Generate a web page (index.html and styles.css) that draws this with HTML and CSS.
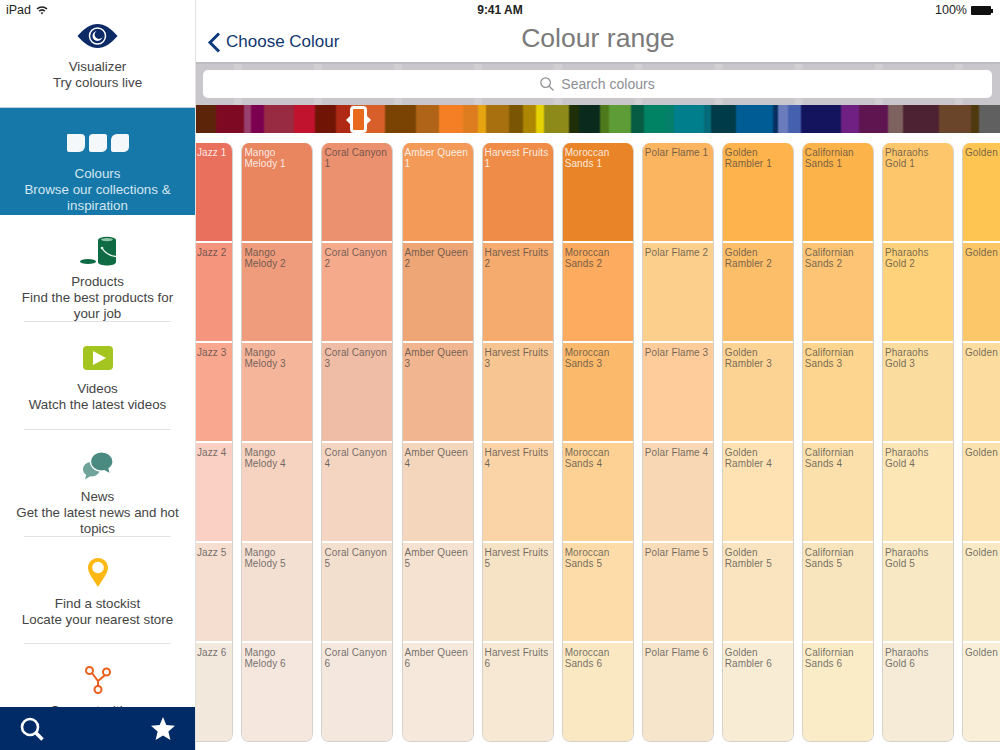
FILE: index.html
```html
<!DOCTYPE html>
<html lang="en">
<head>
    <meta charset="UTF-8">
    <meta name="viewport" content="width=device-width, initial-scale=1.0">
    <title>Colour range</title>
    <link rel="stylesheet" href="styles.css">
</head>
<body>
    <div class="status-bar">
        <div class="status-left">
            <span>iPad</span>
            <svg class="wifi" viewBox="0 0 12 10" width="12" height="10">
                <path d="M0.5 3.4A8 8 0 0 1 11.5 3.4L10.4 4.6A6.4 6.4 0 0 0 1.6 4.6Z"/>
                <path d="M2.6 5.6A5 5 0 0 1 9.4 5.6L8.3 6.8A3.4 3.4 0 0 0 3.7 6.8Z"/>
                <path d="M4.6 7.8A2.1 2.1 0 0 1 7.4 7.8L6 9.4Z"/>
            </svg>
        </div>
        <div class="status-time">9:41 AM</div>
        <div class="status-right">
            <span>100%</span>
            <span class="battery"></span>
        </div>
    </div>

    <aside class="sidebar">
        <nav class="menu">
            <a class="menu-item no-line">
                <span class="menu-icon">
                    <svg viewBox="0 0 40 24" width="41" height="24">
                        <path fill="#0b2a66" d="M0 12C7 4 13 0 20 0S33 4 40 12C33 20 27 24 20 24S7 20 0 12Z"/>
                        <circle cx="20" cy="12" r="8" fill="none" stroke="#fff" stroke-width="1.5"/>
                        <circle cx="20" cy="12" r="5" fill="#fff"/>
                        <circle cx="21.5" cy="10.5" r="4.4" fill="#0b2a66"/>
                    </svg>
                </span>
                <span class="menu-text">Visualizer<br>Try colours live</span>
            </a>
            <a class="menu-item active">
                <span class="menu-icon">
                    <span class="chips">
                        <span class="chip chip-a"></span>
                        <span class="chip chip-b"></span>
                        <span class="chip chip-c"></span>
                    </span>
                </span>
                <span class="menu-text">Colours<br>Browse our collections &amp; inspiration</span>
            </a>
            <a class="menu-item">
                <span class="menu-icon">
                    <svg viewBox="0 0 36 30" width="36" height="30">
                        <ellipse cx="8" cy="25.5" rx="8" ry="2.6" fill="#0f6b43"/>
                        <path fill="#0f6b43" d="M18 4H36V26C36 28.5 31 29.5 27 29.5S18 28.5 18 26Z"/>
                        <ellipse cx="27" cy="4" rx="9" ry="3.2" fill="#0f6b43"/>
                        <ellipse cx="27" cy="3.6" rx="6" ry="1.6" fill="#8fc4a8"/>
                        <path d="M22 12C25 17 30 20 36 20.5" fill="none" stroke="#e6f2ec" stroke-width="1.4"/>
                        <circle cx="22" cy="12" r="1.3" fill="#e6f2ec"/>
                    </svg>
                </span>
                <span class="menu-text">Products<br>Find the best products for your job</span>
            </a>
            <a class="menu-item">
                <span class="menu-icon">
                    <svg viewBox="0 0 30 24" width="30" height="24">
                        <rect width="30" height="24" rx="4" fill="#a4c520"/>
                        <path d="M10 5L23 12L10 19Z" fill="#fff"/>
                    </svg>
                </span>
                <span class="menu-text">Videos<br>Watch the latest videos</span>
            </a>
            <a class="menu-item">
                <span class="menu-icon">
                    <svg viewBox="0 0 30 28" width="30" height="28">
                        <path fill="#6fa39b" d="M8.500 10C3.800 10 0 13.200 0 17.200C0 19.500 1.200 21.500 3.200 22.800L2 27.500L7.200 24.300C7.600 24.400 8 24.400 8.500 24.400C13.200 24.400 17 21.200 17 17.200S13.200 10 8.500 10Z"/>
                        <path fill="#4a8a80" stroke="#fff" stroke-width="1.200" d="M18.500 0C12 0 7.500 4.300 7.500 9.500S12 19 18.500 19C19.500 19 20.300 18.900 21.200 18.700L27.500 22L26 16.500C28.500 14.800 30 12.300 30 9.500C30 4.300 25 0 18.500 0Z"/>
                    </svg>
                </span>
                <span class="menu-text">News<br>Get the latest news and hot topics</span>
            </a>
            <a class="menu-item">
                <span class="menu-icon">
                    <svg viewBox="0 0 20 29" width="20" height="29">
                        <path fill="#fdb813" d="M10 0C4.500 0 0 4.300 0 9.700C0 15.500 6.500 23 10 29C13.500 23 20 15.500 20 9.700C20 4.300 15.500 0 10 0Z"/>
                        <circle cx="10" cy="9.500" r="5.800" fill="#fff"/>
                    </svg>
                </span>
                <span class="menu-text">Find a stockist<br>Locate your nearest store</span>
            </a>
            <a class="menu-item no-line">
                <span class="menu-icon">
                    <svg viewBox="0 0 26 28" width="26" height="28" fill="none" stroke="#e8601c" stroke-width="2">
                        <path d="M7 7L13 15L19.500 9.500M13 15V20.500"/>
                        <circle cx="4.500" cy="4.500" r="3.500"/>
                        <circle cx="21.500" cy="6" r="3.500"/>
                        <circle cx="13" cy="23.500" r="3.500"/>
                    </svg>
                </span>
                <span class="menu-text">Connect with us</span>
            </a>
        </nav>
        <div class="sidebar-footer">
            <svg viewBox="0 0 24 24" width="24" height="24" fill="none" stroke="#fff">
                <circle cx="10" cy="10" r="8" stroke-width="2.600"/>
                <path d="M15.800 15.800L22.500 22.500" stroke-width="3.600"/>
            </svg>
            <svg viewBox="0 0 24 23" width="24" height="23">
                <path fill="#fff" d="M12 0L15.300 7.900L24 8.700L17.400 14.400L19.400 23L12 18.500L4.600 23L6.600 14.400L0 8.700L8.700 7.900Z"/>
            </svg>
        </div>
    </aside>

    <main class="main">
        <header class="topbar">
            <a class="back-link">
                <svg viewBox="0 0 14 21" width="14" height="21" fill="none" stroke="#0c3a7c" stroke-width="3">
                    <path d="M12 1.500L3 10.500L12 19.500"/>
                </svg>
                <span>Choose Colour</span>
            </a>
            <h1>Colour range</h1>
        </header>

        <div class="search-bar">
            <div class="search-field">
                <svg viewBox="0 0 14 14" width="14" height="14" fill="none" stroke="#8e8e93" stroke-width="1.200">
                    <circle cx="5.600" cy="5.600" r="4.800"/>
                    <path d="M9 9L13.500 13.500"/>
                </svg>
                <span>Search colours</span>
            </div>
        </div>

        <div class="spectrum">
            <div class="handle">
                <span class="handle-arrow handle-left"></span>
                <span class="handle-arrow handle-right"></span>
            </div>
        </div>

        <div class="ranges">
            <div class="range range-first">
                <div class="swatch jazz-1 on-dark">Jazz 1</div>
                <div class="swatch jazz-2">Jazz 2</div>
                <div class="swatch jazz-3">Jazz 3</div>
                <div class="swatch jazz-4">Jazz 4</div>
                <div class="swatch jazz-5">Jazz 5</div>
                <div class="swatch jazz-6">Jazz 6</div>
            </div>
            <div class="range">
                <div class="swatch mango-1 on-dark">Mango Melody 1</div>
                <div class="swatch mango-2">Mango Melody 2</div>
                <div class="swatch mango-3">Mango Melody 3</div>
                <div class="swatch mango-4">Mango Melody 4</div>
                <div class="swatch mango-5">Mango Melody 5</div>
                <div class="swatch mango-6">Mango Melody 6</div>
            </div>
            <div class="range">
                <div class="swatch coral-1">Coral Canyon 1</div>
                <div class="swatch coral-2">Coral Canyon 2</div>
                <div class="swatch coral-3">Coral Canyon 3</div>
                <div class="swatch coral-4">Coral Canyon 4</div>
                <div class="swatch coral-5">Coral Canyon 5</div>
                <div class="swatch coral-6">Coral Canyon 6</div>
            </div>
            <div class="range">
                <div class="swatch amber-1 on-dark">Amber Queen 1</div>
                <div class="swatch amber-2">Amber Queen 2</div>
                <div class="swatch amber-3">Amber Queen 3</div>
                <div class="swatch amber-4">Amber Queen 4</div>
                <div class="swatch amber-5">Amber Queen 5</div>
                <div class="swatch amber-6">Amber Queen 6</div>
            </div>
            <div class="range">
                <div class="swatch harvest-1 on-dark">Harvest Fruits 1</div>
                <div class="swatch harvest-2">Harvest Fruits 2</div>
                <div class="swatch harvest-3">Harvest Fruits 3</div>
                <div class="swatch harvest-4">Harvest Fruits 4</div>
                <div class="swatch harvest-5">Harvest Fruits 5</div>
                <div class="swatch harvest-6">Harvest Fruits 6</div>
            </div>
            <div class="range">
                <div class="swatch moroccan-1 on-dark">Moroccan Sands 1</div>
                <div class="swatch moroccan-2">Moroccan Sands 2</div>
                <div class="swatch moroccan-3">Moroccan Sands 3</div>
                <div class="swatch moroccan-4">Moroccan Sands 4</div>
                <div class="swatch moroccan-5">Moroccan Sands 5</div>
                <div class="swatch moroccan-6">Moroccan Sands 6</div>
            </div>
            <div class="range">
                <div class="swatch polar-1">Polar Flame 1</div>
                <div class="swatch polar-2">Polar Flame 2</div>
                <div class="swatch polar-3">Polar Flame 3</div>
                <div class="swatch polar-4">Polar Flame 4</div>
                <div class="swatch polar-5">Polar Flame 5</div>
                <div class="swatch polar-6">Polar Flame 6</div>
            </div>
            <div class="range">
                <div class="swatch rambler-1">Golden Rambler 1</div>
                <div class="swatch rambler-2">Golden Rambler 2</div>
                <div class="swatch rambler-3">Golden Rambler 3</div>
                <div class="swatch rambler-4">Golden Rambler 4</div>
                <div class="swatch rambler-5">Golden Rambler 5</div>
                <div class="swatch rambler-6">Golden Rambler 6</div>
            </div>
            <div class="range">
                <div class="swatch californian-1">Californian Sands 1</div>
                <div class="swatch californian-2">Californian Sands 2</div>
                <div class="swatch californian-3">Californian Sands 3</div>
                <div class="swatch californian-4">Californian Sands 4</div>
                <div class="swatch californian-5">Californian Sands 5</div>
                <div class="swatch californian-6">Californian Sands 6</div>
            </div>
            <div class="range">
                <div class="swatch pharaohs-1">Pharaohs Gold 1</div>
                <div class="swatch pharaohs-2">Pharaohs Gold 2</div>
                <div class="swatch pharaohs-3">Pharaohs Gold 3</div>
                <div class="swatch pharaohs-4">Pharaohs Gold 4</div>
                <div class="swatch pharaohs-5">Pharaohs Gold 5</div>
                <div class="swatch pharaohs-6">Pharaohs Gold 6</div>
            </div>
            <div class="range">
                <div class="swatch golden-1">Golden</div>
                <div class="swatch golden-2">Golden</div>
                <div class="swatch golden-3">Golden</div>
                <div class="swatch golden-4">Golden</div>
                <div class="swatch golden-5">Golden</div>
                <div class="swatch golden-6">Golden</div>
            </div>
        </div>
    </main>
</body>
</html>
```

FILE: styles.css
```css
body {
    font-family: "Liberation Sans", Arial, sans-serif;
    margin: 0;
    width: 1000px;
    height: 750px;
    overflow: hidden;
    display: flex;
    background-color: white;
    color: #333;
}

/* status bar sits over both panes */
.status-bar {
    position: absolute;
    top: 0;
    left: 0;
    width: 1000px;
    height: 20px;
    display: grid;
    grid-template-columns: 1fr auto 1fr;
    align-items: center;
    font-size: 12.5px;
    color: #222;
}
.status-left {
    display: flex;
    align-items: center;
    gap: 5px;
    padding-left: 6px;
}
.wifi {
    fill: #222;
}
.status-time {
    font-size: 12px;
    font-weight: bold;
}
.status-right {
    display: flex;
    align-items: center;
    justify-content: flex-end;
    gap: 4px;
    padding-right: 7px;
}
.battery {
    position: relative;
    width: 20px;
    height: 9px;
    background-color: #111;
    border-radius: 1px;
    margin-right: 2px;
}
.battery::after {
    content: "";
    position: absolute;
    right: -2px;
    top: 3px;
    width: 2px;
    height: 4px;
    background-color: #111;
}

/* sidebar */
.sidebar {
    width: 195px;
    height: 750px;
    flex-shrink: 0;
    border-right: 1px solid #e2e2e2;
    display: flex;
    flex-direction: column;
}
.menu {
    flex: 1;
    overflow: hidden;
}
.menu-item {
    position: relative;
    display: block;
    box-sizing: border-box;
    height: 107.4px;
    padding: 20px 10px 0;
    text-align: center;
    font-size: 13.35px;
    line-height: 16px;
    color: #444;
}
.menu-item::after {
    content: "";
    position: absolute;
    left: 24px;
    right: 24px;
    bottom: 0;
    height: 1px;
    background-color: #e2e2e2;
}
.menu-item.no-line::after,
.menu-item.active::after {
    display: none;
}
.menu-item.active {
    background-color: #1678a8;
    border-top: 1px solid #bcd3df;
    padding-top: 19px;
    color: #d4e6f0;
}
.menu-icon {
    display: flex;
    justify-content: center;
    align-items: center;
    height: 32px;
    margin-bottom: 7px;
}
.menu-text {
    display: block;
}
.chips {
    display: flex;
    gap: 4px;
}
.chip {
    display: block;
    width: 18px;
    height: 18px;
    background-color: #f4f8fa;
}
.chip-a {
    border-radius: 1px 4px 6px 2px;
}
.chip-b {
    border-radius: 4px 2px 5px 2px;
}
.chip-c {
    border-radius: 6px 2px 5px 2px;
}
.sidebar-footer {
    height: 43px;
    flex-shrink: 0;
    background-color: #002b66;
    display: flex;
    align-items: center;
    justify-content: space-between;
    padding: 0 20px;
}

/* main pane */
.main {
    flex: 1;
    min-width: 0;
    display: flex;
    flex-direction: column;
    height: 750px;
}
.topbar {
    box-sizing: border-box;
    height: 62px;
    padding-top: 20px;
    display: grid;
    grid-template-columns: 1fr auto 1fr;
    align-items: center;
}
.topbar h1 {
    grid-column: 2;
    grid-row: 1;
    margin: 0 0 6px;
    font-size: 26.6px;
    font-weight: normal;
    color: #7a7a7a;
}
.back-link {
    grid-column: 1;
    grid-row: 1;
    display: flex;
    align-items: center;
    gap: 5px;
    margin: 2px 0 0 11px;
    font-size: 17px;
    color: #11376f;
}
.search-bar {
    box-sizing: border-box;
    height: 43px;
    padding: 6px 8px 7px 7px;
    border-top: 2px solid #bdbcc0;
    background-color: #c9c7cb;
    background-image: linear-gradient(90deg, rgba(255,255,255,0.14) 0 8px, transparent 8px);
    background-size: 80.1px 100%;
    background-position: 38px 0;
}
.search-field {
    height: 28px;
    background-color: white;
    border-radius: 5px;
    display: flex;
    align-items: center;
    justify-content: center;
    gap: 7px;
    font-size: 14px;
    color: #8e8e93;
}
.spectrum {
    position: relative;
    height: 28px;
    flex-shrink: 0;
    background-image: linear-gradient(90deg,
        #5c2408 0 19px, #7d0a22 21px 47px, #98406e 49px 54px, #7c0050 56px 67px,
        #982a42 69px 97px, #c2132e 99px 118px, #701405 120px 139px, #ae2a14 141px 154px,
        #d95f2a 156px 188px, #7a4304 190px 219px, #af6417 221px 242px, #f57f25 244px 266px,
        #dd7d1f 268px 281px, #e8a512 283px 289px, #a8700f 291px 312px, #7a5504 314px 326px,
        #ad8604 328px 339px, #e5d200 341px 347px, #8d8a1a 349px 372px, #1e2f08 374px 382px,
        #0a2a1e 384px 403px, #4f7a1c 405px 412px, #5d9c36 414px 434px, #055c43 436px 447px,
        #008265 449px 469px, #057e6a 471px 477px, #007e8c 479px 507px, #066a78 509px 514px,
        #003b4a 516px 539px, #005c94 541px 576px, #06305f 578px 581px, #6a7cbc 583px 591px,
        #4560ae 593px 604px, #14145e 606px 644px, #6f2082 646px 662px, #5f1650 664px 691px,
        #7d625f 693px 706px, #4d2232 708px 742px, #6b4529 744px 774px, #4f3a10 776px 782px,
        #606060 784px 804px);
}
.handle {
    position: absolute;
    left: 154px;
    top: 1px;
    box-sizing: border-box;
    width: 17px;
    height: 27px;
    border: 3px solid white;
    border-radius: 4px;
    background-color: #e86a1c;
}
.handle-arrow {
    position: absolute;
    top: 7px;
    border-top: 4px solid transparent;
    border-bottom: 4px solid transparent;
}
.handle-left {
    left: -7px;
    border-right: 4px solid white;
}
.handle-right {
    right: -7px;
    border-left: 4px solid white;
}

/* colour columns */
.ranges {
    flex: 1;
    min-height: 0;
    margin: 10px 0 8px;
    display: grid;
    grid-template-columns: 37.35px repeat(10, 72px);
    column-gap: 8.07px;
    overflow: hidden;
}
.range {
    box-sizing: border-box;
    display: grid;
    grid-template-rows: repeat(6, 1fr);
    row-gap: 2px;
    border: 1px solid #d6d0cb;
    border-top: none;
    border-radius: 8px;
    overflow: hidden;
}
.range-first {
    border-left: none;
    border-radius: 0 8px 8px 0;
}
.range-first .swatch {
    padding-left: 1px;
}
.swatch {
    padding: 4px 2px 0 2px;
    font-size: 10px;
    line-height: 11px;
    letter-spacing: 0.1px;
    color: rgba(60,60,60,0.72);
}
.on-dark {
    color: rgba(255,255,255,0.85);
}

.jazz-1 { background-color: #e8705c; }
.jazz-2 { background-color: #f5957d; }
.jazz-3 { background-color: #f9a78f; }
.jazz-4 { background-color: #fad0c4; }
.jazz-5 { background-color: #f5ddd0; }
.jazz-6 { background-color: #f3e8dc; }

.mango-1 { background-color: #e9855f; }
.mango-2 { background-color: #ee9c7b; }
.mango-3 { background-color: #f5b59b; }
.mango-4 { background-color: #f5d3c0; }
.mango-5 { background-color: #f4e0d2; }
.mango-6 { background-color: #f5e7de; }

.coral-1 { background-color: #ec916f; }
.coral-2 { background-color: #f4aa8b; }
.coral-3 { background-color: #efbda5; }
.coral-4 { background-color: #f4d5c2; }
.coral-5 { background-color: #f3dfce; }
.coral-6 { background-color: #f4e7dd; }

.amber-1 { background-color: #f39a58; }
.amber-2 { background-color: #eea677; }
.amber-3 { background-color: #f1b68f; }
.amber-4 { background-color: #f4d6bd; }
.amber-5 { background-color: #f5e2d0; }
.amber-6 { background-color: #f6e8da; }

.harvest-1 { background-color: #ef8c48; }
.harvest-2 { background-color: #f5ab6e; }
.harvest-3 { background-color: #f7c591; }
.harvest-4 { background-color: #fad3a6; }
.harvest-5 { background-color: #f6e2c4; }
.harvest-6 { background-color: #f6e8d2; }

.moroccan-1 { background-color: #e98428; }
.moroccan-2 { background-color: #fdab5e; }
.moroccan-3 { background-color: #fbba6b; }
.moroccan-4 { background-color: #fdd193; }
.moroccan-5 { background-color: #fddcaa; }
.moroccan-6 { background-color: #fae8c2; }

.polar-1 { background-color: #fbb460; }
.polar-2 { background-color: #fccf8c; }
.polar-3 { background-color: #fdcc9a; }
.polar-4 { background-color: #f8d8b4; }
.polar-5 { background-color: #f9dcb9; }
.polar-6 { background-color: #f6e4cb; }

.rambler-1 { background-color: #feb34c; }
.rambler-2 { background-color: #fdbe6a; }
.rambler-3 { background-color: #fdd394; }
.rambler-4 { background-color: #fee2b4; }
.rambler-5 { background-color: #f9e4bf; }
.rambler-6 { background-color: #f8ecd5; }

.californian-1 { background-color: #fcb34a; }
.californian-2 { background-color: #fcc474; }
.californian-3 { background-color: #fdd58e; }
.californian-4 { background-color: #fbe0ac; }
.californian-5 { background-color: #f9e5bd; }
.californian-6 { background-color: #fbecc8; }

.pharaohs-1 { background-color: #fec66b; }
.pharaohs-2 { background-color: #fed27a; }
.pharaohs-3 { background-color: #fbdc9f; }
.pharaohs-4 { background-color: #fde6b6; }
.pharaohs-5 { background-color: #f8e8c4; }
.pharaohs-6 { background-color: #f5ebd7; }

.golden-1 { background-color: #fec552; }
.golden-2 { background-color: #fcc768; }
.golden-3 { background-color: #fddca0; }
.golden-4 { background-color: #fbe2ae; }
.golden-5 { background-color: #f9eac5; }
.golden-6 { background-color: #f9efd8; }
```
